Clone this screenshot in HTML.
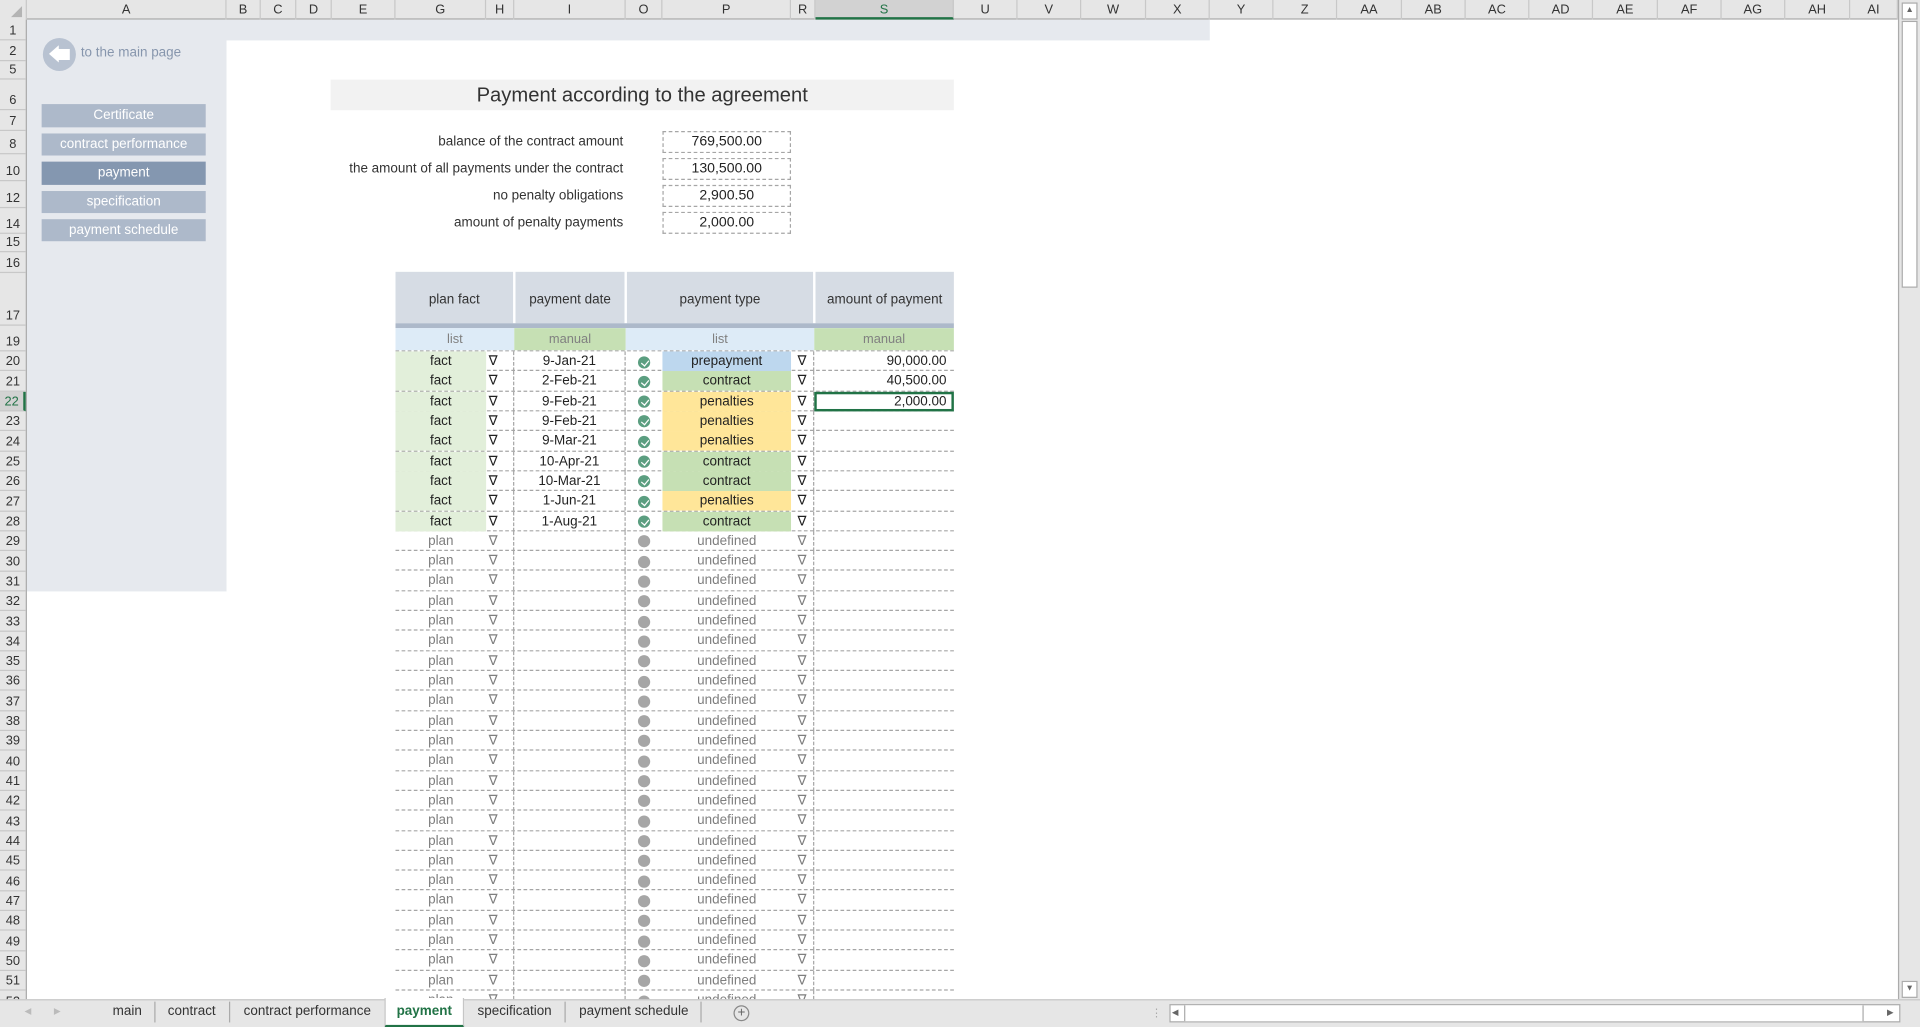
<!DOCTYPE html>
<html><head><meta charset="utf-8">
<style>
*{box-sizing:border-box;margin:0;padding:0}
html,body{width:1920px;height:1027px;overflow:hidden;background:#fff}
#w{position:absolute;left:0;top:0;width:1568px;height:839px;transform:scale(1.22449);transform-origin:0 0;font-family:"Liberation Sans",sans-serif;font-size:11px;color:#222;background:#fff;overflow:hidden}
.a{position:absolute}
#ch{left:0;top:0;width:1550px;height:16px;background:#e6e6e6;border-bottom:1px solid #ababab}
#ch div{position:absolute;top:0;height:16px;line-height:16px;text-align:center;border-right:1px solid #c8c8c8;font-size:10.5px;color:#333}
#rh{left:0;top:16px;width:22px;height:800px;background:#e6e6e6;border-right:1px solid #ababab}
#rh div{position:absolute;left:0;width:21px;text-align:center;border-bottom:1px solid #c8c8c8;font-size:10.5px;color:#333;display:flex;align-items:flex-end;justify-content:center;padding-bottom:1px}
.nav{position:absolute;left:34px;width:134px;height:19px;background:#adb9ca;color:#fff;text-align:center;line-height:19px;font-size:11px}
.lbl{position:absolute;right:1059px;text-align:right;font-size:11px;color:#333}
.val{position:absolute;left:541px;width:105px;height:18px;border:1px dashed #a6a6a6;text-align:center;line-height:16px;font-size:11.5px}
.hd{position:absolute;top:222px;height:42px;background:#d6dce4;text-align:center;line-height:46px;font-size:11px;color:#333}
#g{position:absolute;left:323px;top:287px;width:456px}
.r{display:grid;grid-template-columns:74px 23px 91px 30px 105px 19px 114px;height:16.32px;border-bottom:1px dashed #a6a6a6;font-size:11px;line-height:16px}
.r>div{text-align:center;white-space:nowrap}
.r>div:nth-child(2){border-right:1px dashed #a6a6a6;text-align:left;padding-left:2px}
.r>div:nth-child(3){border-right:1px dashed #a6a6a6}
.r>div:nth-child(6){border-right:1px dashed #a6a6a6}
.r>div:nth-child(7){text-align:right;padding-right:6px}
.f>div:nth-child(1){background:#e2efda}
.p{color:#7f7f7f}
.ok{display:inline-block;width:10px;height:10px;border-radius:50%;background:#5b9e80;margin-top:3.5px;position:relative;vertical-align:top}
.ok:after{content:"";position:absolute;left:3.5px;top:2px;width:3px;height:4.5px;border:solid #fff;border-width:0 1.2px 1.2px 0;transform:rotate(40deg)}
.no{display:inline-block;width:10px;height:10px;border-radius:50%;background:#a6a6a6;margin-top:3.5px;vertical-align:top}
.pre{background:#bdd7ee}.con{background:#c6e0b4}.pen{background:#ffe699}
.tab{position:absolute;top:816px;height:23px;line-height:21px;font-size:11px;color:#333}
.sep{position:absolute;top:818px;width:1px;height:17px;background:#aaa}
</style></head><body><div id="w">
<div class="a" style="left:22px;top:16px;width:966px;height:17px;background:#e6e9ee"></div>
<div class="a" style="left:22px;top:16px;width:163px;height:467px;background:#e6e9ee"></div>

<div id="ch" class="a">
<div style="left:0;width:22px;background:#e6e6e6"><span style="position:absolute;right:3px;bottom:2px;width:0;height:0;border-left:9px solid transparent;border-bottom:9px solid #b4b4b4"></span></div>
<div style="left:22px;width:163px">A</div><div style="left:185px;width:28px">B</div><div style="left:213px;width:29px">C</div><div style="left:242px;width:29px">D</div><div style="left:271px;width:52px">E</div><div style="left:323px;width:74px">G</div><div style="left:397px;width:23px">H</div><div style="left:420px;width:91px">I</div><div style="left:511px;width:30px">O</div><div style="left:541px;width:105px">P</div><div style="left:646px;width:20px">R</div><div style="left:666px;width:113px;background:#d2d2d2;color:#217346;border-bottom:2px solid #217346">S</div><div style="left:779px;width:52px">U</div><div style="left:831px;width:52px">V</div><div style="left:883px;width:53px">W</div><div style="left:936px;width:52px">X</div><div style="left:988px;width:52px">Y</div><div style="left:1040px;width:52px">Z</div><div style="left:1092px;width:53px">AA</div><div style="left:1145px;width:52px">AB</div><div style="left:1197px;width:52px">AC</div><div style="left:1249px;width:52px">AD</div><div style="left:1301px;width:53px">AE</div><div style="left:1354px;width:52px">AF</div><div style="left:1406px;width:52px">AG</div><div style="left:1458px;width:53px">AH</div><div style="left:1511px;width:39px">AI</div>
</div>

<div id="rh" class="a">
<div style="top:0;height:17px">1</div><div style="top:17px;height:17px">2</div><div style="top:34px;height:15px">5</div><div style="top:49px;height:25px">6</div><div style="top:74px;height:17px">7</div><div style="top:91px;height:19px">8</div><div style="top:110px;height:22px">10</div><div style="top:132px;height:22px">12</div><div style="top:154px;height:21px">14</div><div style="top:175px;height:15px">15</div><div style="top:190px;height:17px">16</div><div style="top:207px;height:43px">17</div><div style="top:250px;height:21px">19</div>
<div style="top:271.0px;height:16.32px">20</div><div style="top:287.3px;height:16.32px">21</div><div style="top:303.6px;height:16.32px;background:#d2d2d2;color:#217346;border-right:2px solid #217346">22</div><div style="top:320.0px;height:16.32px">23</div><div style="top:336.3px;height:16.32px">24</div><div style="top:352.6px;height:16.32px">25</div><div style="top:368.9px;height:16.32px">26</div><div style="top:385.2px;height:16.32px">27</div><div style="top:401.6px;height:16.32px">28</div><div style="top:417.9px;height:16.32px">29</div><div style="top:434.2px;height:16.32px">30</div><div style="top:450.5px;height:16.32px">31</div><div style="top:466.8px;height:16.32px">32</div><div style="top:483.2px;height:16.32px">33</div><div style="top:499.5px;height:16.32px">34</div><div style="top:515.8px;height:16.32px">35</div><div style="top:532.1px;height:16.32px">36</div><div style="top:548.4px;height:16.32px">37</div><div style="top:564.8px;height:16.32px">38</div><div style="top:581.1px;height:16.32px">39</div><div style="top:597.4px;height:16.32px">40</div><div style="top:613.7px;height:16.32px">41</div><div style="top:630.0px;height:16.32px">42</div><div style="top:646.4px;height:16.32px">43</div><div style="top:662.7px;height:16.32px">44</div><div style="top:679.0px;height:16.32px">45</div><div style="top:695.3px;height:16.32px">46</div><div style="top:711.6px;height:16.32px">47</div><div style="top:728.0px;height:16.32px">48</div><div style="top:744.3px;height:16.32px">49</div><div style="top:760.6px;height:16.32px">50</div><div style="top:776.9px;height:16.32px">51</div><div style="top:793.2px;height:16.32px">52</div>
</div>

<div class="a" style="left:35px;top:31px;width:27px;height:27px;border-radius:50%;background:#b8c2d1"></div>
<div class="a" style="left:40px;top:37px;width:0;height:0;border-top:7.5px solid transparent;border-bottom:7.5px solid transparent;border-right:8px solid #fff"></div>
<div class="a" style="left:47px;top:40px;width:10px;height:9px;background:#fff"></div>
<div class="a" style="left:66px;top:37px;font-size:11px;color:#8796ad">to the main page</div>

<div class="nav" style="top:85px">Certificate</div>
<div class="nav" style="top:109px;height:18px;line-height:18px">contract performance</div>
<div class="nav" style="top:132px;height:19px;background:#8497b0">payment</div>
<div class="nav" style="top:156px;height:18px;line-height:18px">specification</div>
<div class="nav" style="top:179px;height:18px;line-height:18px">payment schedule</div>

<div class="a" style="left:270px;top:65px;width:509px;height:25px;background:#f2f2f2;text-align:center;line-height:27px;font-size:16.5px;color:#333">Payment according to the agreement</div>

<div class="lbl" style="top:110px">balance of the contract amount</div>
<div class="lbl" style="top:132px">the amount of all payments under the contract</div>
<div class="lbl" style="top:154px">no penalty obligations</div>
<div class="lbl" style="top:176px">amount of penalty payments</div>
<div class="val" style="top:107px">769,500.00</div>
<div class="val" style="top:129px">130,500.00</div>
<div class="val" style="top:151px">2,900.50</div>
<div class="val" style="top:173px">2,000.00</div>

<div class="hd" style="left:323px;width:96px">plan fact</div>
<div class="hd" style="left:421px;width:89px">payment date</div>
<div class="hd" style="left:512px;width:152px">payment type</div>
<div class="hd" style="left:666px;width:113px">amount of payment</div>
<div class="a" style="left:323px;top:264px;width:456px;height:4px;background:#adb9ca"></div>
<div class="a" style="left:323px;top:268px;width:456px;height:19px;font-size:10.5px;color:#808080;line-height:18px;text-align:center;border-bottom:1px dashed #a6a6a6">
<div class="a" style="left:0;width:97px;height:18px;background:#ddebf7">list</div>
<div class="a" style="left:97px;width:91px;height:18px;background:#c6e0b4">manual</div>
<div class="a" style="left:188px;width:154px;height:18px;background:#ddebf7">list</div>
<div class="a" style="left:342px;width:114px;height:18px;background:#c6e0b4">manual</div>
</div>

<div id="g">
<div class="r f"><div>fact</div><div>∇</div><div>9-Jan-21</div><div><span class="ok"></span></div><div class="pre">prepayment</div><div>∇</div><div>90,000.00</div></div>
<div class="r f"><div>fact</div><div>∇</div><div>2-Feb-21</div><div><span class="ok"></span></div><div class="con">contract</div><div>∇</div><div>40,500.00</div></div>
<div class="r f"><div>fact</div><div>∇</div><div>9-Feb-21</div><div><span class="ok"></span></div><div class="pen">penalties</div><div>∇</div><div style="outline:2px solid #217346;outline-offset:-2px">2,000.00</div></div>
<div class="r f"><div>fact</div><div>∇</div><div>9-Feb-21</div><div><span class="ok"></span></div><div class="pen">penalties</div><div>∇</div><div></div></div>
<div class="r f"><div>fact</div><div>∇</div><div>9-Mar-21</div><div><span class="ok"></span></div><div class="pen">penalties</div><div>∇</div><div></div></div>
<div class="r f"><div>fact</div><div>∇</div><div>10-Apr-21</div><div><span class="ok"></span></div><div class="con">contract</div><div>∇</div><div></div></div>
<div class="r f"><div>fact</div><div>∇</div><div>10-Mar-21</div><div><span class="ok"></span></div><div class="con">contract</div><div>∇</div><div></div></div>
<div class="r f"><div>fact</div><div>∇</div><div>1-Jun-21</div><div><span class="ok"></span></div><div class="pen">penalties</div><div>∇</div><div></div></div>
<div class="r f"><div>fact</div><div>∇</div><div>1-Aug-21</div><div><span class="ok"></span></div><div class="con">contract</div><div>∇</div><div></div></div>
<div class="r p"><div>plan</div><div>∇</div><div></div><div><span class="no"></span></div><div>undefined</div><div>∇</div><div></div></div>
<div class="r p"><div>plan</div><div>∇</div><div></div><div><span class="no"></span></div><div>undefined</div><div>∇</div><div></div></div>
<div class="r p"><div>plan</div><div>∇</div><div></div><div><span class="no"></span></div><div>undefined</div><div>∇</div><div></div></div>
<div class="r p"><div>plan</div><div>∇</div><div></div><div><span class="no"></span></div><div>undefined</div><div>∇</div><div></div></div>
<div class="r p"><div>plan</div><div>∇</div><div></div><div><span class="no"></span></div><div>undefined</div><div>∇</div><div></div></div>
<div class="r p"><div>plan</div><div>∇</div><div></div><div><span class="no"></span></div><div>undefined</div><div>∇</div><div></div></div>
<div class="r p"><div>plan</div><div>∇</div><div></div><div><span class="no"></span></div><div>undefined</div><div>∇</div><div></div></div>
<div class="r p"><div>plan</div><div>∇</div><div></div><div><span class="no"></span></div><div>undefined</div><div>∇</div><div></div></div>
<div class="r p"><div>plan</div><div>∇</div><div></div><div><span class="no"></span></div><div>undefined</div><div>∇</div><div></div></div>
<div class="r p"><div>plan</div><div>∇</div><div></div><div><span class="no"></span></div><div>undefined</div><div>∇</div><div></div></div>
<div class="r p"><div>plan</div><div>∇</div><div></div><div><span class="no"></span></div><div>undefined</div><div>∇</div><div></div></div>
<div class="r p"><div>plan</div><div>∇</div><div></div><div><span class="no"></span></div><div>undefined</div><div>∇</div><div></div></div>
<div class="r p"><div>plan</div><div>∇</div><div></div><div><span class="no"></span></div><div>undefined</div><div>∇</div><div></div></div>
<div class="r p"><div>plan</div><div>∇</div><div></div><div><span class="no"></span></div><div>undefined</div><div>∇</div><div></div></div>
<div class="r p"><div>plan</div><div>∇</div><div></div><div><span class="no"></span></div><div>undefined</div><div>∇</div><div></div></div>
<div class="r p"><div>plan</div><div>∇</div><div></div><div><span class="no"></span></div><div>undefined</div><div>∇</div><div></div></div>
<div class="r p"><div>plan</div><div>∇</div><div></div><div><span class="no"></span></div><div>undefined</div><div>∇</div><div></div></div>
<div class="r p"><div>plan</div><div>∇</div><div></div><div><span class="no"></span></div><div>undefined</div><div>∇</div><div></div></div>
<div class="r p"><div>plan</div><div>∇</div><div></div><div><span class="no"></span></div><div>undefined</div><div>∇</div><div></div></div>
<div class="r p"><div>plan</div><div>∇</div><div></div><div><span class="no"></span></div><div>undefined</div><div>∇</div><div></div></div>
<div class="r p"><div>plan</div><div>∇</div><div></div><div><span class="no"></span></div><div>undefined</div><div>∇</div><div></div></div>
<div class="r p"><div>plan</div><div>∇</div><div></div><div><span class="no"></span></div><div>undefined</div><div>∇</div><div></div></div>
<div class="r p"><div>plan</div><div>∇</div><div></div><div><span class="no"></span></div><div>undefined</div><div>∇</div><div></div></div>
<div class="r p"><div>plan</div><div>∇</div><div></div><div><span class="no"></span></div><div>undefined</div><div>∇</div><div></div></div>
</div>

<div class="a" style="left:1550px;top:0;width:18px;height:816px;background:#e6e6e6;border-left:1px solid #ababab"></div>
<div class="a" style="left:1553px;top:2px;width:13px;height:14px;background:#fff;border:1px solid #ababab;text-align:center;font-size:7px;line-height:12px;color:#666">▲</div>
<div class="a" style="left:1553px;top:17px;width:13px;height:218px;background:#fff;border:1px solid #ababab"></div>
<div class="a" style="left:1553px;top:801px;width:13px;height:14px;background:#fff;border:1px solid #ababab;text-align:center;font-size:7px;line-height:12px;color:#666">▼</div>

<div class="a" style="left:0;top:816px;width:1568px;height:23px;background:#e6e6e6;border-top:1px solid #c6c6c6"></div>
<div class="tab" style="left:20px;color:#bbb">◂</div><div class="tab" style="left:44px;color:#bbb">▸</div>
<div class="tab" style="left:92px">main</div>
<div class="sep" style="left:126px"></div>
<div class="tab" style="left:137px">contract</div>
<div class="sep" style="left:187px"></div>
<div class="tab" style="left:199px">contract performance</div>
<div class="a" style="left:314px;top:815px;width:65px;height:24px;background:#fff;border-left:1px solid #c6c6c6;border-right:1px solid #c6c6c6;border-bottom:2px solid #217346;text-align:center;line-height:22px;font-weight:bold;color:#217346;font-size:11px">payment</div>
<div class="tab" style="left:390px">specification</div>
<div class="sep" style="left:461px"></div>
<div class="tab" style="left:473px">payment schedule</div>
<div class="sep" style="left:572px"></div>
<div class="a" style="left:599px;top:821px;width:13px;height:13px;border-radius:50%;border:1px solid #888;text-align:center;line-height:11px;font-size:11px;color:#666">+</div>
<div class="a" style="left:940px;top:822px;color:#aaa;font-size:9px">⋮</div>
<div class="a" style="left:955px;top:820px;width:597px;height:15px;background:#fff;border:1px solid #ababab"></div>
<div class="a" style="left:957px;top:821px;font-size:7px;color:#666;line-height:13px">◀</div>
<div class="a" style="left:967px;top:821px;width:555px;height:13px;border-left:1px solid #ababab;border-right:1px solid #ababab;background:#fff"></div>
<div class="a" style="left:1541px;top:821px;font-size:7px;color:#666;line-height:13px">▶</div>
</div></body></html>
